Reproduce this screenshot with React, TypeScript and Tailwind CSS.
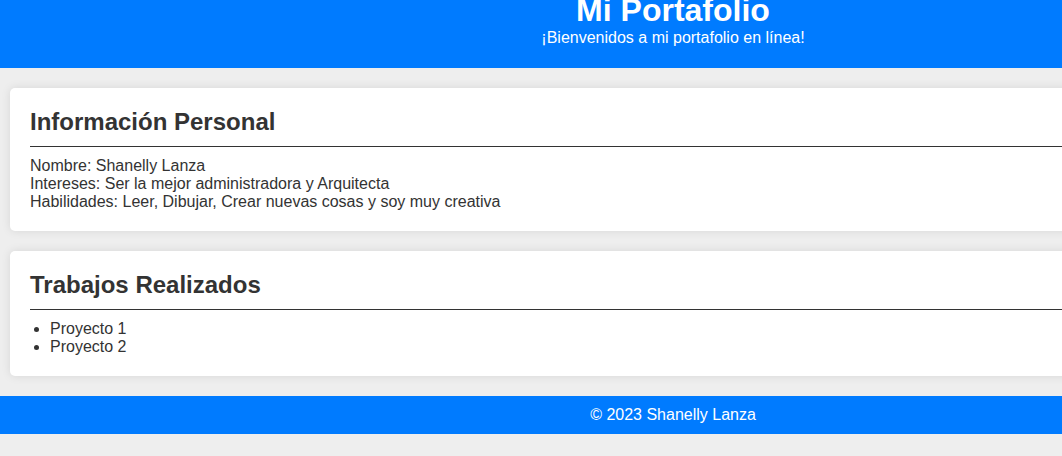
import React from 'react';

const Section: React.FC<{ title: string; children: React.ReactNode }> = ({ title, children }) => (
    <section className="bg-white rounded-[5px] p-5 shadow-[0_0_10px_rgba(0,0,0,0.1)]">
        <h2 className="text-2xl font-bold leading-[normal] pb-[10px] mb-[10px] border-b border-[#333]">{title}</h2>
        {children}
    </section>
);

const App: React.FC = () => {
    return (
        <div className="w-full h-screen overflow-hidden bg-[#eeeeee] text-[#333] text-base leading-[normal] font-['Liberation_Sans',Arial,sans-serif]">
            <div className="w-[1346px]">
                <header className="bg-[#007bff] text-white text-center pb-[21px]">
                    <h1 className="text-[32px] font-bold leading-[normal] -mt-2">Mi Portafolio</h1>
                    <p className="leading-[normal]">¡Bienvenidos a mi portafolio en línea!</p>
                </header>

                <main className="flex flex-col gap-5 px-[10px] py-5">
                    <Section title="Información Personal">
                        <p className="leading-[normal]">Nombre: Shanelly Lanza</p>
                        <p className="leading-[normal]">Intereses: Ser la mejor administradora y Arquitecta</p>
                        <p className="leading-[normal]">Habilidades: Leer, Dibujar, Crear nuevas cosas y soy muy creativa</p>
                    </Section>

                    <Section title="Trabajos Realizados">
                        <ul className="list-disc pl-5 leading-[normal]">
                            <li>Proyecto 1</li>
                            <li>Proyecto 2</li>
                        </ul>
                    </Section>
                </main>

                <footer className="bg-[#007bff] text-white text-center py-[10px]">
                    <p className="leading-[normal]">© 2023 Shanelly Lanza</p>
                </footer>
            </div>
        </div>
    );
};

export default App;
